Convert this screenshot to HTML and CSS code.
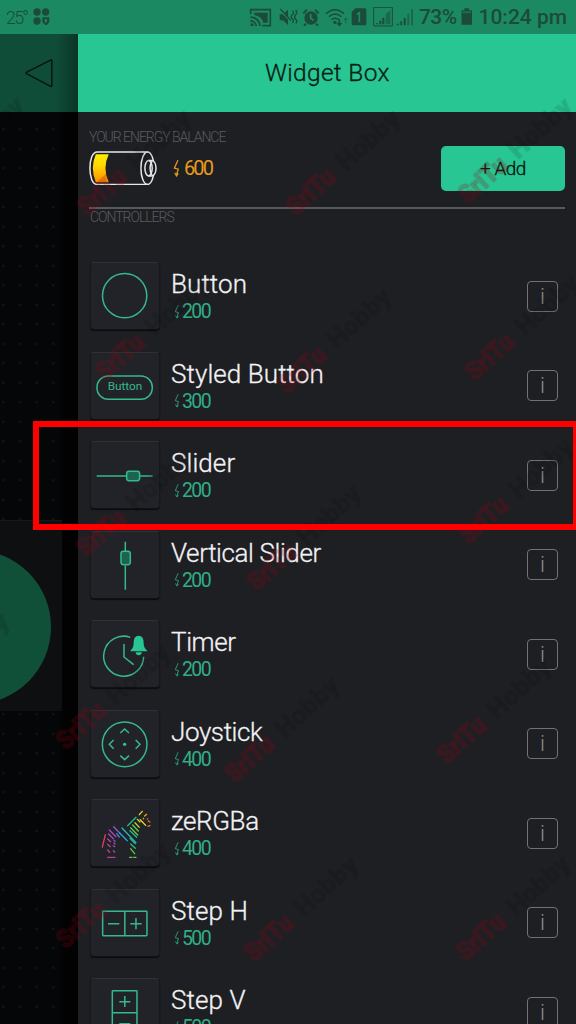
FILE: index.html
```html
<!DOCTYPE html>
<html lang="en">
<head>
<meta charset="utf-8">
<title>Widget Box</title>
<link rel="stylesheet" href="styles.css">
</head>
<body>
<svg class="defs" width="0" height="0">
  <symbol id="bolt" viewBox="0 0 18 48"><path d="M13 1 3 23l11 3-5 15M4 36l5 9 5-7" /></symbol>
</svg>
<div class="screen">
  <header class="status">
    <span class="temp">25°</span>
    <svg class="apps" viewBox="0 0 54 52"><circle cx="12" cy="12" r="11"/><circle cx="38" cy="12" r="11"/><circle cx="12" cy="39" r="11"/><path d="M28 28h21v12q0 8-10 12-11-4-11-12z"/><path class="cut" d="M35 34h7v5q0 3-4 5-3-2-3-5z"/></svg>
    <svg class="tray" viewBox="0 0 498 72">
      <g class="line" stroke-width="5">
        <path d="M5 22V8h59v48H40"/><path d="M4 30q26 2 29 27M4 41q15 2 18 16" /></g>
      <path d="M5 48q9 1 10 9H5zM16 17h40v30H43Q38 28 16 24z"/>
      <path d="M92 22h10l15-14v46l-15-14H92z"/><path class="gap" d="M92 9l46 46"/><path class="line" stroke-width="4" d="m94 6 32 34M130 11q7 6 0 12t0 12 0 12M140 9q7 7 0 14t0 14 0 12"/>
      <circle cx="186" cy="33" r="20"/><path class="line" stroke-width="6" d="m163 19 11-11M209 19 198 8M171 50l-6 6M201 50l6 6"/><path class="gap" d="M185 21v13l9 6"/>
      <g class="line" stroke-width="4.500"><path d="M231 20q27-24 54 0M240 29q18-16 37 0M248 38q10-9 21 0M271 37v17m-6-6 6 7 6-7"/></g><path class="line" stroke-width="2" d="M290 49V34m-5 5 5-6 5 6"/><circle cx="258" cy="46" r="5"/>
      <path d="M319 4h28q5 0 5 5v41q0 5-5 5h-34q-5 0-5-5V15z"/>
      <path class="gap" d="m323 22 8-5v28"/>
      <path class="line" stroke-width="3" d="M374 1h56v56h-56z"/><path d="M382 48h5v4h-5zM391 41h6v11h-6zM400 32h6v20h-6z"/><path class="faint" d="M410 22l14-12v42h-14z"/>
      <path d="M443 50h6v5h-6zM454 43h5v12h-5zM464 33h6v22h-6z"/><path class="faint" d="M475 20h6v35h-6zM486 7h6v48h-6z"/>
    </svg>
    <span class="percent">73%</span>
    <svg class="cell" viewBox="0 0 34 52"><path d="M10 1h14v6h9v44H1V7h9z"/><path class="light" d="M4 10h26v6H4z"/></svg>
    <span class="clock">10:24 pm</span>
  </header>

  <main class="main">
    <section class="backdrop">
      <div class="back"><svg viewBox="0 0 90 100"><path d="M81 10q4-3 4 2v76q0 6-5 3L7 53q-5-3 0-6z"/></svg></div>
      <div class="canvas">
        <div class="card"><div class="knob"></div></div>
      </div>
    </section>

    <section class="panel">
      <h1 class="title">Widget Box</h1>
      <div class="balance">
        <div class="energy">
          <h2 class="label">YOUR ENERGY BALANCE</h2>
          <div class="amount">
            <svg class="battery" viewBox="0 0 204 104">
              <defs><linearGradient id="fuel" x1="0" y1="0" x2="0" y2="1"><stop offset="0" stop-color="#ffec00"/><stop offset=".4" stop-color="#ffd800"/><stop offset="1" stop-color="#ff9000"/></linearGradient></defs>
              <path fill="url(#fuel)" d="M20 10h39q-20 42 0 84H20q-18-42 0-84z"/>
              <path class="shell" d="M177 3H24C-5 3-5 101 24 101h153"/><ellipse class="shell" cx="176" cy="52" rx="20" ry="49"/>
              <path class="mask" d="M181 29q20 0 20 23t-20 23z"/><path class="shell" d="M179 29h9c18 0 18 46 0 46h-9"/><ellipse class="shell" cx="179" cy="52" rx="11" ry="23"/><path class="shell" d="M189 31q-11 21 0 42"/>
            </svg>
            <svg class="bolt bolt-big"><use href="#bolt"/></svg><span class="credits">600</span>
          </div>
        </div>
        <button class="add">+ Add</button>
      </div>
      <h2 class="label section">CONTROLLERS</h2>
      <ul class="list">
        <li class="row"><div class="tile"><svg viewBox="0 0 208 204"><circle cx="104" cy="101" r="66.500"/></svg></div><div class="info"><div class="name">Button</div><div class="cost"><svg class="bolt"><use href="#bolt"/></svg>200</div></div><div class="help">i</div></li>
        <li class="row"><div class="tile"><svg viewBox="0 0 208 204"><rect x="21" y="72" width="166" height="70" rx="34"/><text x="53" y="115" textLength="104" lengthAdjust="spacingAndGlyphs">Button</text></svg></div><div class="info"><div class="name">Styled Button</div><div class="cost"><svg class="bolt"><use href="#bolt"/></svg>300</div></div><div class="help">i</div></li>
        <li class="row"><div class="tile"><svg viewBox="0 0 208 204"><path d="M20 105h89m41 0h38"/><rect class="handle" x="110" y="91" width="39" height="28" rx="7"/></svg></div><div class="info"><div class="name">Slider</div><div class="cost"><svg class="bolt"><use href="#bolt"/></svg>200</div></div><div class="help">i</div></li>
        <li class="row"><div class="tile"><svg viewBox="0 0 208 204"><path d="M106 32v30m0 42v72"/><rect class="handle" x="93" y="61" width="28" height="40" rx="7"/></svg></div><div class="info"><div class="name tight">Vertical Slider</div><div class="cost"><svg class="bolt"><use href="#bolt"/></svg>200</div></div><div class="help">i</div></li>
        <li class="row"><div class="tile"><svg viewBox="0 0 208 204"><path d="M121 52A60 60 0 1 0 161 110M102 72v39l29 23"/><path class="solid" d="M122 91q9-7 9-22 0-22 15-22t15 22q0 15 10 22v3h-49zM137 97h19q-2 9-10 9t-9-9z"/></svg></div><div class="info"><div class="name tight">Timer</div><div class="cost"><svg class="bolt"><use href="#bolt"/></svg>200</div></div><div class="help">i</div></li>
        <li class="row"><div class="tile"><svg viewBox="0 0 208 204"><circle cx="104" cy="103" r="67"/><path d="m91 69 13-12 13 12M91 137l13 12 13-12M71 90l-13 13 13 13M137 90l13 13-13 13"/><circle class="solid" cx="104" cy="103" r="5"/></svg></div><div class="info"><div class="name tight">Joystick</div><div class="cost"><svg class="bolt"><use href="#bolt"/></svg>400</div></div><div class="help">i</div></li>
        <li class="row"><div class="tile"><svg class="zebra" viewBox="0 0 208 204">
          <path stroke="#d84060" d="m46 107-9 37"/>
          <path stroke="#c83b91" d="m53 120 9 8M53 136l8 7M53 153l6 7M53 175h10m3 0h2"/>
          <path stroke="#a848b4" d="m58 93 20 20M56 105l14 14M72 124l3 3M70 140l4 3M70 155l4 4M71 175h4"/>
          <path stroke="#8060c8" d="m71 83 18 19M72 132l3 3"/>
          <path stroke="#4a7fdc" d="m80 104 8 10"/>
          <path stroke="#27a6e3" d="m89 102 23 23"/>
          <path stroke="#22b8c4" d="m96 87 42 44"/>
          <path stroke="#28b88b" d="m138 55-25 25M120 95l20 20M120 118l16 16M122 135l14 13"/>
          <path stroke="#61c94a" d="m122 86 21 22M128 78l17 18M122 149l12 15M119 175h7m5 0h7"/>
          <path stroke="#b8d832" d="m135 71 13 14M142 61l8 8"/>
          <path stroke="#ecdc20" d="m157 37-9 10M151 62l16 17"/>
          <path stroke="#f5a321" d="m170 46-6 5M160 58l1 1"/>
          <path stroke="#e8703c" d="m175 66 5 3M174 82l6-2M172 60l1 0"/>
        </svg></div><div class="info"><div class="name tight">zeRGBa</div><div class="cost"><svg class="bolt"><use href="#bolt"/></svg>400</div></div><div class="help">i</div></li>
        <li class="row"><div class="tile"><svg viewBox="0 0 208 204"><rect x="38" y="67" width="133" height="73" rx="2"/><path d="M104.500 67v73M54 104h34M121 104h34M138 87v34"/></svg></div><div class="info"><div class="name">Step H</div><div class="cost"><svg class="bolt"><use href="#bolt"/></svg>500</div></div><div class="help">i</div></li>
        <li class="row"><div class="tile"><svg viewBox="0 0 208 204"><rect x="67" y="38" width="74" height="133" rx="2"/><path d="M67 104.500h74M88 71h33M104.500 54v33M88 137h33"/></svg></div><div class="info"><div class="name">Step V</div><div class="cost"><svg class="bolt"><use href="#bolt"/></svg>500</div></div><div class="help">i</div></li>
      </ul>
    </section>
  </main>

  <svg class="marks" viewBox="0 0 576 1024">
    <defs><g id="mark"><text class="red" textLength="56" lengthAdjust="spacingAndGlyphs">SriTu</text><text class="black" x="67" textLength="76" lengthAdjust="spacingAndGlyphs">Hobby</text></g></defs>
    <use href="#mark" transform="translate(-80 204) rotate(-42)"/>
    <use href="#mark" transform="translate(87 217) rotate(-42)"/>
    <use href="#mark" transform="translate(296 217) rotate(-42)"/>
    <use href="#mark" transform="translate(468 205) rotate(-42)"/>
    <use href="#mark" transform="translate(105 382) rotate(-42)"/>
    <use href="#mark" transform="translate(287 395) rotate(-42)"/>
    <use href="#mark" transform="translate(475 382) rotate(-42)"/>
    <use href="#mark" transform="translate(86 558) rotate(-42)"/>
    <use href="#mark" transform="translate(257 592) rotate(-42)"/>
    <use href="#mark" transform="translate(469 545) rotate(-42)"/>
    <use href="#mark" transform="translate(-95 720) rotate(-42)"/>
    <use href="#mark" transform="translate(66 751) rotate(-42)"/>
    <use href="#mark" transform="translate(235 784) rotate(-42)"/>
    <use href="#mark" transform="translate(447 765) rotate(-42)"/>
    <use href="#mark" transform="translate(66 950) rotate(-42)"/>
    <use href="#mark" transform="translate(254 963) rotate(-42)"/>
    <use href="#mark" transform="translate(466 962) rotate(-42)"/>
  </svg>
  <div class="highlight"></div>
</div>
</body>
</html>
```
FILE: styles.css
```css
* { box-sizing: border-box; }
body { margin: 0; background: #1e1f23; font-family: Roboto, "Liberation Sans", sans-serif; }
h1, h2, ul { margin: 0; padding: 0; font-weight: 300; list-style: none; }
svg { display: block; flex: none; }
.defs { position: absolute; }
.screen { position: relative; width: 576px; height: 1024px; overflow: hidden; display: flex; flex-direction: column; }

.status { height: 34px; flex: none; display: flex; align-items: flex-start; background: #1b8a63; color: #1c4a3b; fill: #1c4a3b; white-space: nowrap; }
.status span { line-height: 35px; }
.temp { width: 27px; margin-left: 6px; font-size: 18px; font-weight: 300; letter-spacing: -1.800px; }
.apps { width: 18px; height: 17.300px; margin-top: 8px; }
.tray { width: 166px; height: 24px; margin: 7px 0 0 198px; }
.line { fill: none; stroke: #1c4a3b; }
.gap { fill: none; stroke: #1b8a63; stroke-width: 5; }
.cut { fill: #1b8a63; }
.faint { opacity: .55; }
.light { fill: #1b8a63; opacity: .6; }
.percent { width: 42px; margin-left: 4px; font-size: 21px; font-weight: 500; letter-spacing: -.6px; }
.cell { width: 11.500px; height: 17px; margin-top: 8px; }
.clock { margin-left: 6px; font-size: 21px; font-weight: 500; letter-spacing: 0; }

.main { flex: 1; min-height: 0; display: flex; }
.backdrop { width: 78px; flex: none; background: #050607; }
.back { height: 78px; padding: 23px 0 0 24px; background: linear-gradient(90deg, #104d38 72%, #0a3526); }
.back svg { width: 30px; height: 32px; fill: none; stroke: #07150f; stroke-width: 4.500; }
.canvas { height: 912px; padding-top: 408px; background: linear-gradient(90deg, transparent 58px, #020203 64px), radial-gradient(circle, #131517 .8px, transparent 1.600px) -5px 7.500px / 16.670px 19.500px, #050608; }
.card { width: 62px; height: 191px; padding-top: 29.500px; background: #0e0f11; border-top: 1px solid #16181a; overflow: hidden; }
.knob { width: 154px; height: 154px; margin-left: -103px; margin-top: -1px; border-radius: 50%; background: #105039; }

.panel { flex: 1; min-width: 0; background: #1e1f23; }
.title { height: 78px; line-height: 78px; padding-left: 187px; background: #27c692; color: #071c14; font-size: 24.500px; font-weight: 300; letter-spacing: .3px; white-space: nowrap; -webkit-text-stroke: .3px currentColor; }
.balance { height: 97px; margin: 0 11px 0 11px; display: flex; justify-content: space-between; border-bottom: 2px solid #58595d; }
.energy { padding-top: 17px; }
.label { color: #5a5b5f; font-size: 14px; line-height: 16px; font-weight: 300; letter-spacing: -1.030px; white-space: nowrap; }
.amount { display: flex; align-items: center; height: 44px; margin-top: 1px; }
.battery { width: 68px; height: 34.500px; }
.shell { fill: none; stroke: #e8e8ea; stroke-width: 4.500; }
.mask { fill: #1e1f23; }
.bolt { width: 6px; height: 14px; fill: none; stroke: currentColor; stroke-width: 2.800; }
.bolt-big { width: 7px; height: 17px; margin-left: 16px; color: #e79a1c; stroke-width: 3.500; }
.credits { margin-left: 4px; color: #e79a1c; font-size: 20px; font-weight: 400; letter-spacing: -1.900px; }
.add { width: 124px; height: 45px; margin-top: 33.500px; padding: 0; border: 0; border-radius: 5px; background: #27c692; color: #07150f; font: 300 19px Roboto, sans-serif; letter-spacing: -.5px; -webkit-text-stroke: .3px currentColor; }
.section { height: 53px; padding-left: 12px; }
.list { padding-left: 12px; }
.row { height: 89.550px; display: flex; align-items: flex-start; }
.tile { width: 70px; height: 68px; flex: none; border: 1px solid #17181b; border-top-color: #303136; border-bottom-color: #101114; border-radius: 4px; background: #222328; box-shadow: 0 1px 1px #0b0c0e; }
.tile svg { width: 69.300px; height: 68px; margin: -1px; fill: none; stroke: #35b98b; stroke-width: 4.500; }
.tile .handle { fill: #1d6450; }
.tile .solid { fill: #27c692; stroke: none; }
.tile text { fill: #35b98b; stroke: none; font: 400 34px Roboto, sans-serif; }
.tile .zebra { stroke-width: 4; stroke-linecap: round; }
.info { width: 366px; padding: 6px 0 0 11px; white-space: nowrap; }
.name { color: #f2f2f4; font-size: 26px; line-height: 32px; font-weight: 300; letter-spacing: .08px; -webkit-text-stroke: .3px currentColor; }
.tight { letter-spacing: -.4px; }
.cost { display: flex; align-items: center; gap: 2px; padding-left: 3px; color: #2fae84; font-size: 19.500px; line-height: 23px; font-weight: 400; letter-spacing: -1.600px; }
.help { width: 31px; height: 31px; margin: 18.500px 0 0 1px; border: 1.500px solid #717276; border-radius: 4px; color: #8c8d90; font-size: 22px; line-height: 29px; text-align: center; font-weight: 300; }

.marks { position: absolute; inset: 0; width: 576px; height: 1024px; pointer-events: none; }
.marks text { font: 900 26px Roboto, "Liberation Sans", sans-serif; stroke-width: 1.500px; filter: blur(.6px); }
.red { fill: rgba(150, 0, 20, .2); stroke: rgba(150, 0, 20, .14); }
.black { fill: rgba(0, 0, 0, .11); stroke: rgba(0, 0, 0, .04); }
.highlight { position: absolute; left: 33px; top: 421px; width: 546px; height: 109px; border: 6px solid #fe0000; }
```
